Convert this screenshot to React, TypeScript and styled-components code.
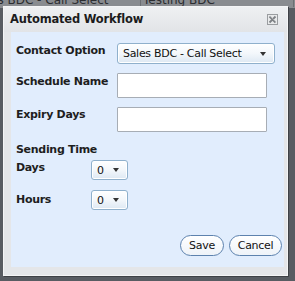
import React from "react";
import styled, { createGlobalStyle } from "styled-components";

const Global = createGlobalStyle`
  html, body { margin: 0; padding: 0; }
  body { background: #5b5f65; font-family: "DejaVu Sans", Verdana, sans-serif; }
`;

const Backdrop = styled.div`
  position: relative;
  width: 295px;
  height: 281px;
  overflow: hidden;
  background: #585c62;
`;

const PageStrip = styled.div`
  display: flex;
  align-items: flex-end;
  height: 8px;
  background: #898c90;
  color: #2b2d30;
  font-size: 12px;
  line-height: 14px;
  overflow: hidden;
`;

const PageCell = styled.div<{ $w: number; $shift: number }>`
  width: ${(p) => p.$w}px;
  margin-left: ${(p) => p.$shift}px;
  flex: none;
  margin-bottom: 1px;
  white-space: nowrap;
  border-right: 1px solid #6c6f73;
  padding-left: 2px;
`;

const Dialog = styled.div`
  position: absolute;
  left: 3px;
  top: 6px;
  width: 283px;
  height: 268px;
  border: 1px solid #f4f5f6;
  background: #e4e6e9;
  box-shadow: 1px 1px 0 #3e4146;
  display: flex;
  flex-direction: column;
`;

const TitleBar = styled.div`
  height: 24px;
  flex: none;
  display: flex;
  align-items: center;
  justify-content: space-between;
  padding: 0 9px 1px 6px;
  background: linear-gradient(#eef0f2, #e2e4e7);
`;

const Title = styled.div`
  font-weight: bold;
  font-size: 11.5px;
  color: #1c1c1c;
  letter-spacing: -0.2px;
`;

const CloseIcon = () => (
  <svg width="11" height="11" viewBox="0 0 11 11">
    <rect x="0.5" y="0.5" width="10" height="10" fill="#e9eaeb" stroke="#9a9da0" />
    <path d="M2.5 2.5 L8.5 8.5 M8.5 2.5 L2.5 8.5" stroke="#7e8185" strokeWidth="1.8" />
    <path d="M3 2 L9 8" stroke="#c4c6c8" strokeWidth="0.6" />
  </svg>
);

const Body = styled.div`
  flex: 1;
  margin: 0 3px 8px 7px;
  background: #e1edfd;
  padding: 11px 2px 0 5px;
  display: flex;
  flex-direction: column;
`;

const Row = styled.div<{ $mt: number }>`
  display: flex;
  align-items: flex-start;
  margin-top: ${(p) => p.$mt}px;
`;

const Label = styled.div<{ $w: number; $pt: number }>`
  width: ${(p) => p.$w}px;
  flex: none;
  padding-top: ${(p) => p.$pt}px;
  font-weight: bold;
  font-size: 11px;
  line-height: 13px;
  color: #1e1e1e;
  letter-spacing: -0.3px;
`;

const Heading = styled(Label)`
  width: auto;
`;

const SelectBox = styled.div<{ $w: number; $h: number }>`
  width: ${(p) => p.$w}px;
  height: ${(p) => p.$h}px;
  box-sizing: border-box;
  border: 1px solid #8fb0cc;
  border-radius: 3px;
  background: linear-gradient(#ffffff, #f3f7fb 50%, #dde8f3);
  box-shadow: inset 0 0 0 1px #ffffff;
  display: flex;
  align-items: center;
  justify-content: space-between;
  padding: 0 8px 0 5px;
  font-size: 11px;
  color: #111;
  letter-spacing: -0.3px;
`;

const Arrow = styled.span`
  width: 0;
  height: 0;
  border-left: 3.5px solid transparent;
  border-right: 3.5px solid transparent;
  border-top: 4px solid #333;
`;

const TextInput = styled.input`
  width: 150px;
  height: 25px;
  box-sizing: border-box;
  margin: 0;
  border: 1px solid #a7adb5;
  border-radius: 1px;
  background: #fff;
  padding: 0 4px;
`;

const Footer = styled.div`
  margin-top: auto;
  margin-bottom: 11px;
  display: flex;
  justify-content: flex-end;
  gap: 5px;
`;

const Button = styled.button<{ $w: number }>`
  width: ${(p) => p.$w}px;
  height: 21px;
  box-sizing: border-box;
  margin: 0;
  border: 1.5px solid #5d82ae;
  border-radius: 11px;
  background: linear-gradient(#ffffff, #eef3f9);
  font-family: "DejaVu Sans", Verdana, sans-serif;
  font-size: 11px;
  color: #111;
  letter-spacing: -0.3px;
  padding: 0;
`;

export default function App() {
  return (
    <>
      <Global />
      <Backdrop>
        <PageStrip>
          <PageCell $w={150} $shift={-12}>es BDC - Call Select</PageCell>
          <PageCell $w={150} $shift={0}>Testing BDC</PageCell>
        </PageStrip>
        <Dialog>
          <TitleBar>
            <Title>Automated Workflow</Title>
            <CloseIcon />
          </TitleBar>
          <Body>
            <Row $mt={0}>
              <Label $w={101} $pt={1}>Contact Option</Label>
              <SelectBox $w={158} $h={21}>
                Sales BDC - Call Select
                <Arrow />
              </SelectBox>
            </Row>
            <Row $mt={9}>
              <Label $w={101} $pt={2}>Schedule Name</Label>
              <TextInput />
            </Row>
            <Row $mt={9}>
              <Label $w={101} $pt={1}>Expiry Days</Label>
              <TextInput />
            </Row>
            <Row $mt={11}>
              <Heading $w={0} $pt={0}>Sending Time</Heading>
            </Row>
            <Row $mt={4}>
              <Label $w={75} $pt={1}>Days</Label>
              <SelectBox $w={37} $h={20}>
                0
                <Arrow />
              </SelectBox>
            </Row>
            <Row $mt={10}>
              <Label $w={75} $pt={3}>Hours</Label>
              <SelectBox $w={37} $h={20}>
                0
                <Arrow />
              </SelectBox>
            </Row>
            <Footer>
              <Button $w={44}>Save</Button>
              <Button $w={53}>Cancel</Button>
            </Footer>
          </Body>
        </Dialog>
      </Backdrop>
    </>
  );
}
